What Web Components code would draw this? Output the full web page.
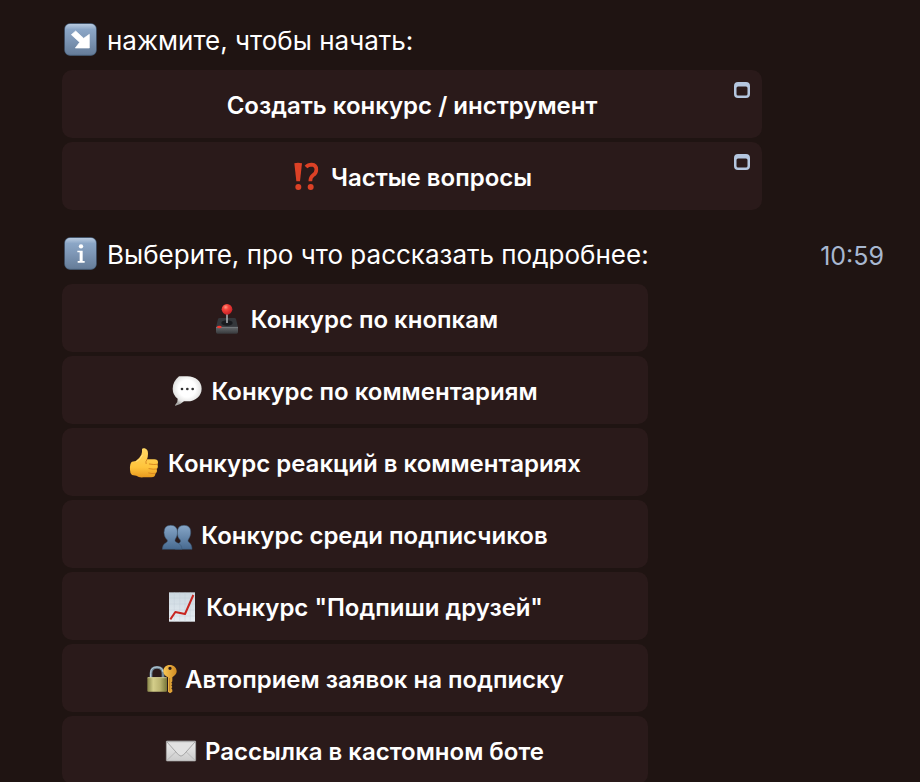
<!DOCTYPE html>
<html lang="ru">
<head>
<meta charset="utf-8">
<meta name="viewport" content="width=device-width, initial-scale=1">
<title>Конкурсы</title>
<style>
  body {
    margin: 0;
    background: #1f1412;
    color: #fff;
    font-family: Inter, "Noto Sans", sans-serif;
  }
</style>
</head>
<body>
<chat-feed>
  <chat-message>
    <emoji-icon slot="icon" name="arrow"></emoji-icon>
    нажмите, чтобы начать:
    <bot-button slot="keyboard" webapp>Создать конкурс / инструмент</bot-button>
    <bot-button slot="keyboard" webapp><emoji-icon slot="icon" name="question"></emoji-icon>Частые вопросы</bot-button>
  </chat-message>
  <chat-message time="10:59" compact>
    <emoji-icon slot="icon" name="info"></emoji-icon>
    Выберите, про что рассказать подробнее:
    <bot-button slot="keyboard"><emoji-icon slot="icon" name="joystick"></emoji-icon>Конкурс по кнопкам</bot-button>
    <bot-button slot="keyboard"><emoji-icon slot="icon" name="bubble"></emoji-icon>Конкурс по комментариям</bot-button>
    <bot-button slot="keyboard"><emoji-icon slot="icon" name="thumb"></emoji-icon>Конкурс реакций в комментариях</bot-button>
    <bot-button slot="keyboard"><emoji-icon slot="icon" name="people"></emoji-icon>Конкурс среди подписчиков</bot-button>
    <bot-button slot="keyboard"><emoji-icon slot="icon" name="chart"></emoji-icon>Конкурс "Подпиши друзей"</bot-button>
    <bot-button slot="keyboard"><emoji-icon slot="icon" name="lock"></emoji-icon>Автоприем заявок на подписку</bot-button>
    <bot-button slot="keyboard"><emoji-icon slot="icon" name="mail"></emoji-icon>Рассылка в кастомном боте</bot-button>
  </chat-message>
</chat-feed>

<script>
const keycap = `
  <defs>
    <linearGradient id="k" x2="0" y2="1">
      <stop offset="0" stop-color="#b9cbe0"/><stop offset=".18" stop-color="#8ba6c6"/>
      <stop offset=".5" stop-color="#7e97b6"/><stop offset="1" stop-color="#667d99"/>
    </linearGradient>
  </defs>
  <rect x="1" y="1" width="97" height="97" rx="17" fill="#506a87"/>
  <rect x="3" y="3" width="93" height="92" rx="15" fill="url(#k)"/>`;

const icons = {
  arrow: { box: 99, art: `${keycap}
    <path d="M35 24 59 46 76 34V75H34L47 58 22 35Z" fill="#fff" stroke="#fff" stroke-width="2" stroke-linejoin="round"/>` },

  info: { box: 99, art: `${keycap}
    <circle cx="51" cy="28" r="6.5" fill="#fff"/>
    <path d="M40 41H56V72H62V77H41V72H47V46H40Z" fill="#fff"/>` },

  question: { box: 90, art: `
    <g fill="#dc4126">
      <path d="M7 4Q18 1 30 4L24 58H13Z"/><circle cx="19" cy="75" r="9"/><circle cx="56" cy="75" r="9"/>
    </g>
    <path d="M42 15Q48 8 59 8 73 9 73 23 73 33 63 40 55 46 55 58" fill="none" stroke="#dc4126" stroke-width="11"/>` },

  joystick: { box: 90, art: `
    <defs>
      <radialGradient id="b" cx=".38" cy=".3" r=".7"><stop stop-color="#ff9b86"/><stop offset=".35" stop-color="#f6453c"/><stop offset="1" stop-color="#c71f25"/></radialGradient>
      <linearGradient id="f" x2="0" y2="1"><stop stop-color="#666a6d"/><stop offset="1" stop-color="#37393c"/></linearGradient>
    </defs>
    <path d="M18 45Q19 42 23 42H67Q71 42 72 45L78 70H12Z" fill="#34373b"/>
    <path d="M12 69H78V84Q78 89 73 89H17Q12 89 12 84Z" fill="url(#f)"/>
    <path d="M12 70H78" stroke="#808487" stroke-width="2"/>
    <ellipse cx="45" cy="57" rx="17" ry="8" fill="#191b1f"/>
    <path d="M45 29V57" stroke="#a4a8ac" stroke-width="5"/>
    <ellipse cx="22" cy="69" rx="7" ry="4" fill="#f33a32"/>
    <circle cx="45" cy="16" r="16" fill="url(#b)"/>` },

  bubble: { box: 90, art: `
    <defs><radialGradient id="w" cx=".5" cy=".42" r=".58"><stop offset=".5" stop-color="#fff"/><stop offset=".8" stop-color="#e6e6e5"/><stop offset="1" stop-color="#a8a8a6"/></radialGradient></defs>
    <path d="M46 1C71 1 89 17 89 38 89 60 70 76 46 76H36Q25 87 10 89 8 88 10 86 18 79 17 68 2 57 2 38 2 17 21 1 46 1Z" fill="url(#w)"/>
    <g fill="#333"><circle cx="30" cy="39" r="4"/><circle cx="46" cy="39" r="4"/><circle cx="62" cy="39" r="4"/></g>` },

  thumb: { box: 90, art: `
    <defs><linearGradient id="t" x2="0" y2="1"><stop stop-color="#ffd765"/><stop offset=".65" stop-color="#ffc43b"/><stop offset="1" stop-color="#e89a1f"/></linearGradient></defs>
    <path d="M39 4Q40-1 47 1 57 4 57 17 57 26 54 34H76Q87 34 87 43 87 47 85 49 89 59 83 63 86 73 79 76 80 88 67 88H43Q31 90 22 83L9 81Q3 77 3 65 2 45 9 41L20 39Q31 32 37 20 40 14 39 4Z" fill="url(#t)"/>
    <path d="M85 49Q76 51 61 48M83 63Q74 65 60 62M79 76Q69 78 59 75M54 34Q48 42 51 47" fill="none" stroke="#d98921" stroke-width="3" stroke-linecap="round"/>
    <path d="M22 41Q34 35 41 20" fill="none" stroke="#ffe387" stroke-width="3"/>` },

  people: { box: 90, art: `
    <defs><linearGradient id="p" x2="0" y2="90" gradientUnits="userSpaceOnUse"><stop offset=".15" stop-color="#89a8c9"/><stop offset="1" stop-color="#45688e"/></linearGradient></defs>
    <g fill="url(#p)" stroke="#385470" stroke-width="1.5">
      <path d="M66 16C80 16 88 25 86 41 85 52 79 56 78 62 78 68 90 68 90 88H40Q41 73 53 68 57 65 55 60 46 53 46 38 46 16 66 16Z"/>
      <path d="M26 16C40 16 48 25 46 41 45 52 39 56 39 62 39 69 59 67 60 88H1Q1 73 12 68 18 65 16 60 7 53 6 38 6 16 26 16Z"/>
    </g>` },

  chart: { box: 90, art: `
    <defs><linearGradient id="c" x2="0" y2="1"><stop stop-color="#cbd7df"/><stop offset="1" stop-color="#e6edf2"/></linearGradient></defs>
    <path d="M6 1H84V89H6Z" fill="url(#c)"/>
    <path d="M22 1V89M38 1V89M54 1V89M70 1V89M6 18H84M6 36H84M6 54H84M6 72H84" stroke="#bfccd5" stroke-width="1"/>
    <path d="M10 82 25 60 54 66 79 9" fill="none" stroke="#c82620" stroke-width="6" stroke-linejoin="round"/>` },

  lock: { box: 90, art: `
    <defs>
      <linearGradient id="l"><stop stop-color="#88864a"/><stop offset=".3" stop-color="#d4ce8a"/><stop offset=".65" stop-color="#bbb471"/><stop offset="1" stop-color="#777538"/></linearGradient>
      <linearGradient id="g"><stop stop-color="#f9c653"/><stop offset="1" stop-color="#d18b23"/></linearGradient>
    </defs>
    <path d="M15 43V28Q15 10 33 10 51 10 51 28V43" fill="none" stroke="#708797" stroke-width="8"/>
    <path d="M14 41V28Q14 9 33 9 49 9 51 24" fill="none" stroke="#c0d3df" stroke-width="3"/>
    <rect x="4" y="40" width="59" height="43" rx="3" fill="url(#l)"/>
    <path d="M5 41H62" stroke="#e3dda6" stroke-width="2"/>
    <path fill-rule="evenodd" d="M71 3C83 3 92 11 92 22 92 31 84 36 79 40V52L76 56 79 60 76 64 79 69 76 73 79 77V83L72 88 66 83V40C58 36 52 31 52 22 52 11 60 3 71 3ZM72 8A5 5 0 1 0 72 18 5 5 0 1 0 72 8Z" fill="url(#g)"/>
    <path d="M71 42V82" stroke="#aa6d18" stroke-width="2"/>` },

  mail: { box: 90, art: `
    <defs><linearGradient id="m" x2="0" y2="1"><stop stop-color="#ececec"/><stop offset="1" stop-color="#cbcbcb"/></linearGradient></defs>
    <rect x="1" y="15" width="88" height="60" rx="2" fill="url(#m)" stroke="#a5a5a5" stroke-width="2"/>
    <path d="M3 73 32 45M87 73 58 45" stroke="#aaa" stroke-width="2"/>
    <path d="M2 17 37 56Q45 65 53 56L88 17Z" fill="#e2e2e2" stroke="#999" stroke-width="2.5"/>` }
};

class EmojiIcon extends HTMLElement {
  constructor() {
    super();
    this.attachShadow({ mode: 'open' });
  }

  connectedCallback() {
    const { box, art } = icons[this.getAttribute('name')];
    this.shadowRoot.innerHTML = `
      <style>
        :host { display: block; flex: none; width: ${box / 3}px; height: ${box / 3}px; }
        svg { display: block; width: 100%; height: 100%; overflow: visible; }
      </style>
      <svg viewBox="0 0 ${box} ${box}" aria-hidden="true">${art}</svg>
    `;
  }
}

class BotButton extends HTMLElement {
  constructor() {
    super();
    this.attachShadow({ mode: 'open' });
  }

  connectedCallback() {
    // small window mark on buttons that open a web app
    const mark = this.hasAttribute('webapp') ? `
      <svg class="mark" viewBox="0 0 16 16" aria-hidden="true">
        <path fill-rule="evenodd" d="M4 0H12Q16 0 16 4V12Q16 16 12 16H4Q0 16 0 12V4Q0 0 4 0ZM4 4.5Q2.5 4.5 2.5 6V12Q2.5 13.5 4 13.5H12Q13.5 13.5 13.5 12V6Q13.5 4.5 12 4.5Z" fill="#b4c6df"/>
      </svg>` : '';

    this.shadowRoot.innerHTML = `
      <style>
        :host { display: block; }
        button {
          position: relative;
          display: flex;
          align-items: center;
          justify-content: center;
          gap: 9px;
          width: 100%;
          min-height: 68px;
          padding: 6px 32px 4px;
          border: 0;
          border-radius: 10px;
          background: #2a1a1a;
          color: inherit;
          font: 600 24px/32px Inter, "Noto Sans", sans-serif;
          cursor: pointer;
        }
        button:hover { background: #332020; }
        .label { padding-top: 2px; }
        .mark {
          position: absolute;
          top: 12px;
          right: 12px;
          width: 16px;
          height: 16px;
        }
      </style>
      <button type="button"><slot name="icon"></slot><span class="label"><slot></slot></span>${mark}</button>
    `;
  }
}

class ChatMessage extends HTMLElement {
  constructor() {
    super();
    this.attachShadow({ mode: 'open' });
  }

  connectedCallback() {
    const time = this.getAttribute('time');
    this.shadowRoot.innerHTML = `
      <style>
        :host { display: block; }
        .line {
          display: flex;
          align-items: flex-start;
          gap: 10px;
          padding-left: 2px;
          font-size: 26px;
          line-height: 36px;
        }
        .line ::slotted(emoji-icon) { margin-top: 2px; }
        .text { padding-top: 2px; }
        time {
          margin-left: auto;
          padding-top: 4px;
          color: #a7b7d0;
          font-size: 25px;
          line-height: 34px;
        }
        .keyboard {
          display: flex;
          flex-direction: column;
          gap: 4px;
          max-width: 700px;
          margin-top: 11px;
        }
        :host([compact]) .keyboard { max-width: 586px; }
      </style>
      <div class="line">
        <slot name="icon"></slot>
        <span class="text"><slot></slot></span>
        ${time ? `<time>${time}</time>` : ''}
      </div>
      <div class="keyboard"><slot name="keyboard"></slot></div>
    `;
  }
}

class ChatFeed extends HTMLElement {
  constructor() {
    super();
    this.attachShadow({ mode: 'open' });
    this.shadowRoot.innerHTML = `
      <style>
        :host {
          display: flex;
          flex-direction: column;
          gap: 25px;
          padding: 21px 36px 0 62px;
        }
      </style>
      <slot></slot>
    `;
  }
}

customElements.define('emoji-icon', EmojiIcon);
customElements.define('bot-button', BotButton);
customElements.define('chat-message', ChatMessage);
customElements.define('chat-feed', ChatFeed);
</script>
</body>
</html>
